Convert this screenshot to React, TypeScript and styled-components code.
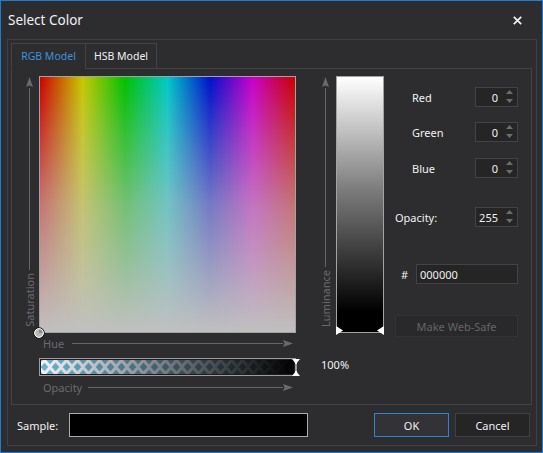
import React from 'react';
import styled, { createGlobalStyle } from 'styled-components';

const GlobalStyle = createGlobalStyle`
  html, body { margin: 0; padding: 0; background: #2d2d30; }
  body { font-family: "Noto Sans", "Open Sans", sans-serif; }
  #root { width: 543px; height: 453px; }
`;

const Window = styled.div`
  width: 543px;
  height: 453px;
  box-sizing: border-box;
  border: 1px solid #1a7fd4;
  background: #2d2d30;
  display: flex;
  flex-direction: column;
  font-family: "Noto Sans", "Open Sans", sans-serif;
  color: #f1f1f1;
  overflow: hidden;
`;

const TitleBar = styled.div`
  height: 38px;
  flex: none;
  display: flex;
  align-items: center;
  justify-content: space-between;
  padding: 0 20px 0 7px;
`;

const Title = styled.span`
  font-size: 13.5px;
  color: #f1f1f1;
`;

const CloseButton = styled.div`
  width: 9px;
  height: 9px;
  display: flex;
`;

const Frame = styled.div`
  flex: 1;
  margin: 0 5px 6px 6px;
  border: 1px solid #3f3f46;
  padding: 3px 4px 0 3px;
  display: flex;
  flex-direction: column;
`;

const TabStrip = styled.div`
  display: flex;
  height: 26px;
  margin-bottom: -1px;
  position: relative;
  z-index: 1;
`;

const Tab = styled.div<{ $active?: boolean; $w: number; $first?: boolean }>`
  width: ${(p) => p.$w}px;
  height: 26px;
  box-sizing: border-box;
  border: 1px solid #434346;
  border-bottom-color: ${(p) => (p.$active ? '#2d2d30' : '#434346')};
  margin-left: ${(p) => (p.$first ? 0 : -1)}px;
  display: flex;
  align-items: center;
  justify-content: center;
  font-size: 10.5px;
  color: ${(p) => (p.$active ? '#3a92de' : '#f1f1f1')};
`;

const Panel = styled.div`
  height: 337px;
  box-sizing: border-box;
  border: 1px solid #434346;
  padding: 7px 0 0 13px;
  display: flex;
  align-items: flex-start;
`;

const PickerGrid = styled.div`
  display: grid;
  grid-template-columns: 9px 257px;
  column-gap: 5px;
  align-content: start;
`;

const VAxis = styled.div`
  width: 9px;
  height: 257px;
  box-sizing: border-box;
  padding: 1px 0 6px;
  display: flex;
  flex-direction: column;
  align-items: center;
`;

const AxisLine = styled.div`
  width: 1px;
  flex: 1;
  background: #656565;
`;

const AxisText = styled.span`
  writing-mode: vertical-rl;
  transform: rotate(180deg);
  font-size: 11px;
  line-height: 9px;
  color: #6b6b6b;
  margin-top: 3px;
  white-space: nowrap;
`;

const ColorSquare = styled.div`
  position: relative;
  width: 257px;
  height: 257px;
  box-sizing: border-box;
  border: 1px solid #a3a3a3;
  background:
    linear-gradient(
      to bottom,
      rgba(192, 192, 192, 0) 0%,
      rgba(192, 192, 192, 0.6) 50%,
      rgba(192, 192, 192, 1) 100%
    ),
    linear-gradient(
      to right,
      #cc0000 0%,
      #c8c800 16.7%,
      #00c000 33.3%,
      #00c8c8 50%,
      #0010cc 66.7%,
      #c800c8 83.3%,
      #cc0000 100%
    );
`;

const SquareMarker = styled.div`
  position: absolute;
  left: -7px;
  bottom: -7px;
  width: 12px;
  height: 12px;
  display: flex;
`;

const HAxisRow = styled.div<{ $gap: number; $mt?: number }>`
  grid-column: 2;
  height: 20px;
  margin-top: ${(p) => p.$mt ?? 0}px;
  display: flex;
  align-items: center;
  gap: ${(p) => p.$gap}px;
  padding: 0 3px 0 4px;
  font-size: 11px;
  color: #6b6b6b;
`;

const HLineWrap = styled.div`
  flex: 1;
  display: flex;
  align-items: center;
`;

const HLine = styled.div`
  flex: 1;
  height: 1px;
  background: #656565;
`;

const OpacityTrack = styled.div`
  grid-column: 2;
  position: relative;
  margin-top: 5px;
  height: 18px;
  box-sizing: border-box;
  border: 1px solid #9c9c9c;
  padding: 1px;
  background: #1e1e1e;
  display: flex;
`;

const OpacityMarker = styled.div`
  position: absolute;
  right: -5px;
  top: 0px;
  width: 8px;
  height: 17px;
  display: flex;
`;

const LumArea = styled.div`
  margin-left: 25px;
  display: flex;
  flex-direction: column;
`;

const LumRow = styled.div`
  display: flex;
  gap: 6px;
`;

const LumBar = styled.div`
  position: relative;
  width: 48px;
  height: 257px;
  box-sizing: border-box;
  border: 1px solid #a3a3a3;
  background: linear-gradient(to bottom, #ffffff 0%, #7a7a7a 45%, #000000 92%);
`;

const LumMarker = styled.div<{ $side: 'left' | 'right' }>`
  position: absolute;
  ${(p) => p.$side}: -1px;
  bottom: -3px;
  width: 7px;
  height: 9px;
  display: flex;
`;

const Percent = styled.span`
  margin-top: 24px;
  font-size: 11px;
  line-height: 15px;
  color: #f1f1f1;
`;

const Controls = styled.div`
  margin-left: 11px;
  width: 123px;
  padding-top: 11px;
  display: flex;
  flex-direction: column;
`;

const FieldRow = styled.div<{ $mt: number; $indent: number }>`
  margin-top: ${(p) => p.$mt}px;
  padding-left: ${(p) => p.$indent}px;
  height: 20px;
  display: flex;
  align-items: center;
  justify-content: space-between;
  font-size: 11px;
  color: #f1f1f1;
`;

const SpinBox = styled.div`
  width: 43px;
  height: 20px;
  box-sizing: border-box;
  border: 1px solid #434346;
  background: #252526;
  display: flex;
  align-items: center;
  justify-content: flex-end;
  padding-right: 4px;
  gap: 8px;
  font-size: 11px;
  color: #f1f1f1;
`;

const HexInput = styled.div`
  width: 102px;
  height: 20px;
  box-sizing: border-box;
  border: 1px solid #434346;
  background: #252526;
  display: flex;
  align-items: center;
  padding-left: 3px;
  font-size: 11px;
  color: #f1f1f1;
`;

const WebSafeButton = styled.div`
  margin-top: 31px;
  height: 22px;
  box-sizing: border-box;
  border: 1px solid #333336;
  background: #29292b;
  display: flex;
  align-items: center;
  justify-content: center;
  font-size: 11px;
  color: #656565;
`;

const Footer = styled.div`
  height: 40px;
  display: flex;
  align-items: center;
  padding: 0 2px 0 6px;
  font-size: 11px;
`;

const SampleLabel = styled.span`
  width: 52px;
  flex: none;
  color: #f1f1f1;
`;

const SampleBox = styled.div`
  width: 239px;
  height: 24px;
  box-sizing: border-box;
  border: 1px solid #ababab;
  background: #000000;
`;

const Spacer = styled.div`
  flex: 1;
`;

const DialogButton = styled.div<{ $primary?: boolean }>`
  width: 75px;
  height: 24px;
  box-sizing: border-box;
  margin-left: ${(p) => (p.$primary ? 0 : 6)}px;
  border: 1px solid ${(p) => (p.$primary ? '#2a84d2' : '#3f3f46')};
  background: ${(p) => (p.$primary ? '#333337' : '#252526')};
  display: flex;
  align-items: center;
  justify-content: center;
  color: #f1f1f1;
`;

const UpArrowHead = () => (
  <svg width="9" height="11" viewBox="0 0 9 11" style={{ flex: 'none' }}>
    <polygon points="4.5,0 8,10 4.5,8.5 1,10" fill="#6a6a6a" />
  </svg>
);

const RightArrowHead = () => (
  <svg width="10" height="7" viewBox="0 0 10 7" style={{ flex: 'none' }}>
    <polygon points="0,0 10,3.5 0,7 1.5,3.5" fill="#6a6a6a" />
  </svg>
);

const SpinArrows = () => (
  <svg width="7" height="18" viewBox="0 0 7 18">
    <polygon points="0,6 3.5,2 7,6" fill="#6d6d6d" />
    <polygon points="0,11 7,11 3.5,15" fill="#6d6d6d" />
  </svg>
);

const Spin = ({ value }: { value: string }) => (
  <SpinBox>
    <span>{value}</span>
    <SpinArrows />
  </SpinBox>
);

const DiamondStrip = () => {
  const w = 253;
  const h = 14;
  const hw = 3.8;
  const hh = 4.2;
  const d = (cx: number, cy: number) =>
    `${cx},${cy - hh} ${cx + hw},${cy} ${cx},${cy + hh} ${cx - hw},${cy}`;
  return (
    <svg width={w} height={h} viewBox={`0 0 ${w} ${h}`}>
      <defs>
        <pattern id="diamonds" width="11" height="14" patternUnits="userSpaceOnUse" x="-2" y="0">
          <rect width="11" height="14" fill="#f4f4f4" />
          <polygon points={d(5.5, 7)} fill="#6bb3d7" />
          <polygon points={d(0, 0)} fill="#6bb3d7" />
          <polygon points={d(11, 0)} fill="#6bb3d7" />
          <polygon points={d(0, 14)} fill="#6bb3d7" />
          <polygon points={d(11, 14)} fill="#6bb3d7" />
        </pattern>
        <linearGradient id="fade" x1="0" y1="0" x2="1" y2="0">
          <stop offset="0" stopColor="#000" stopOpacity="0" />
          <stop offset="1" stopColor="#000" stopOpacity="1" />
        </linearGradient>
      </defs>
      <rect width={w} height={h} fill="url(#diamonds)" />
      <rect width={w} height={h} fill="url(#fade)" />
    </svg>
  );
};

export default function App() {
  return (
    <>
      <GlobalStyle />
      <Window>
        <TitleBar>
          <Title>Select Color</Title>
          <CloseButton>
            <svg width="9" height="9" viewBox="0 0 9 9">
              <path d="M0.8 0.8 L8.2 8.2 M8.2 0.8 L0.8 8.2" stroke="#f1f1f1" strokeWidth="1.7" />
            </svg>
          </CloseButton>
        </TitleBar>
        <Frame>
          <TabStrip>
            <Tab $active $first $w={75}>RGB Model</Tab>
            <Tab $w={72}>HSB Model</Tab>
          </TabStrip>
          <Panel>
            <PickerGrid>
              <VAxis>
                <UpArrowHead />
                <AxisLine />
                <AxisText>Saturation</AxisText>
              </VAxis>
              <ColorSquare>
                <SquareMarker>
                  <svg width="12" height="12" viewBox="0 0 12 12">
                    <circle cx="6" cy="6" r="5.3" fill="#b8b8b8" stroke="#111" strokeWidth="1" />
                    <path d="M6 6 L6 1.8 A4.2 4.2 0 0 1 10.2 6 Z" fill="#8a8a8a" />
                    <circle cx="6" cy="6" r="4.3" fill="none" stroke="#ffffff" strokeWidth="1" />
                  </svg>
                </SquareMarker>
              </ColorSquare>
              <HAxisRow $gap={8}>
                <span>Hue</span>
                <HLineWrap>
                  <HLine />
                  <RightArrowHead />
                </HLineWrap>
              </HAxisRow>
              <OpacityTrack>
                <DiamondStrip />
                <OpacityMarker>
                  <svg width="8" height="17" viewBox="0 0 8 17">
                    <polygon points="0,0 8,0 4,5" fill="#ffffff" />
                    <polygon points="0,17 8,17 4,12" fill="#ffffff" />
                    <rect x="3" y="4" width="2" height="9" fill="#ffffff" />
                    <rect x="3.6" y="5" width="0.8" height="7" fill="#000" />
                  </svg>
                </OpacityMarker>
              </OpacityTrack>
              <HAxisRow $gap={6} $mt={1}>
                <span>Opacity</span>
                <HLineWrap>
                  <HLine />
                  <RightArrowHead />
                </HLineWrap>
              </HAxisRow>
            </PickerGrid>
            <LumArea>
              <LumRow>
                <VAxis>
                  <UpArrowHead />
                  <AxisLine />
                  <AxisText>Luminance</AxisText>
                </VAxis>
                <LumBar>
                  <LumMarker $side="left">
                    <svg width="7" height="9" viewBox="0 0 7 9">
                      <polygon points="0,0 7,4.5 0,9" fill="#ffffff" />
                    </svg>
                  </LumMarker>
                  <LumMarker $side="right">
                    <svg width="7" height="9" viewBox="0 0 7 9">
                      <polygon points="7,0 0,4.5 7,9" fill="#ffffff" />
                    </svg>
                  </LumMarker>
                </LumBar>
              </LumRow>
              <Percent>100%</Percent>
            </LumArea>
            <Controls>
              <FieldRow $mt={0} $indent={17}>
                <span>Red</span>
                <Spin value="0" />
              </FieldRow>
              <FieldRow $mt={15} $indent={17}>
                <span>Green</span>
                <Spin value="0" />
              </FieldRow>
              <FieldRow $mt={16} $indent={17}>
                <span>Blue</span>
                <Spin value="0" />
              </FieldRow>
              <FieldRow $mt={29} $indent={0}>
                <span>Opacity:</span>
                <Spin value="255" />
              </FieldRow>
              <FieldRow $mt={37} $indent={6}>
                <span>#</span>
                <HexInput>000000</HexInput>
              </FieldRow>
              <WebSafeButton>Make Web-Safe</WebSafeButton>
            </Controls>
          </Panel>
          <Footer>
            <SampleLabel>Sample:</SampleLabel>
            <SampleBox />
            <Spacer />
            <DialogButton $primary>OK</DialogButton>
            <DialogButton>Cancel</DialogButton>
          </Footer>
        </Frame>
      </Window>
    </>
  );
}
